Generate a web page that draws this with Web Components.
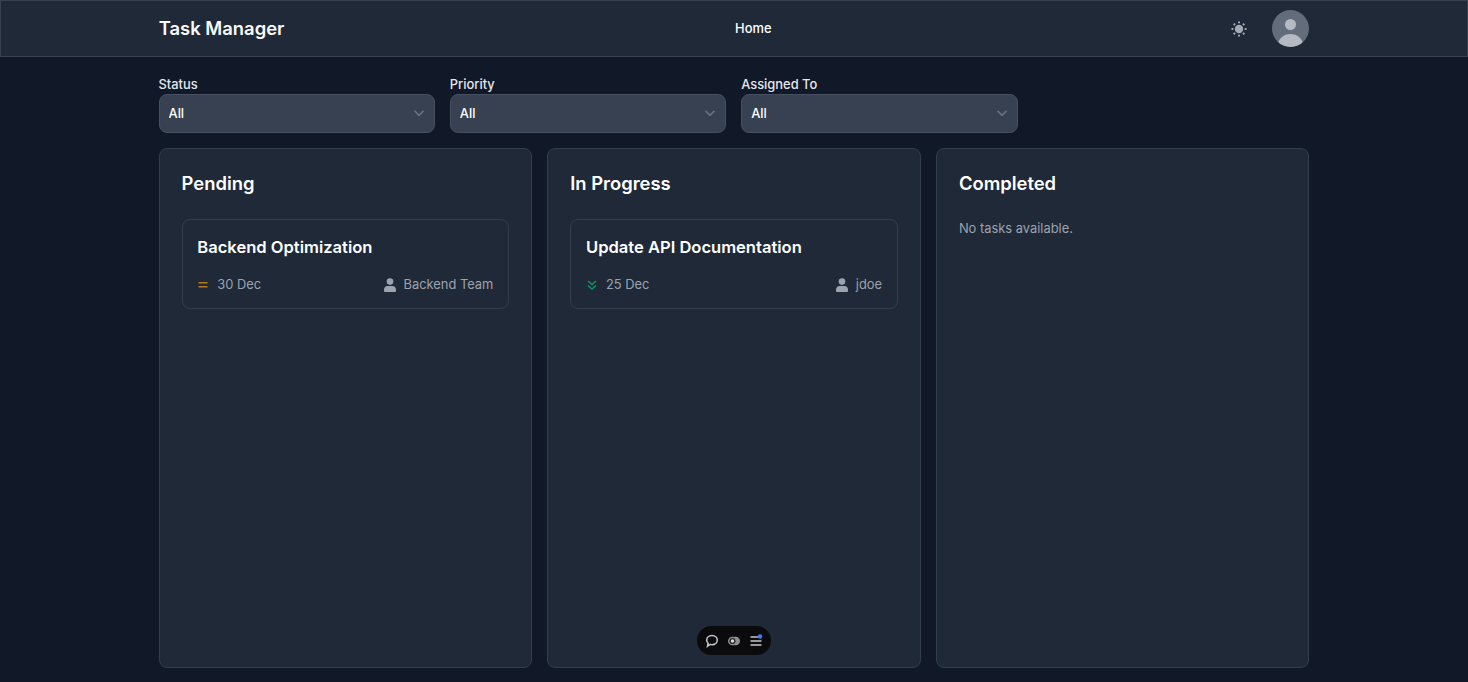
<!DOCTYPE html>
<html lang="en">
<head>
<meta charset="utf-8">
<title>Task Manager</title>
<style>
    html {
        font-size: 14.72px;
    }
    html, body {
        margin: 0;
        height: 100%;
        overflow: hidden;
        background: #111827;
        color: #fff;
        font-family: Inter, "Liberation Sans", sans-serif;
    }
</style>
</head>
<body>
<tm-app></tm-app>
<script>
const userIcon = `<svg viewBox="0 0 12 14" fill="currentColor"><circle cx="6" cy="3.600" r="3.300"/><path d="M3.500 8h5C10.500 8 12 9.600 12 11.600V13a1 1 0 0 1-1 1H1a1 1 0 0 1-1-1v-1.400C0 9.600 1.500 8 3.500 8z"/></svg>`

class TmHeader extends HTMLElement{
    constructor(){
        super()
        const root = this.attachShadow({mode:'open'})
        root.innerHTML = `
        <style>
            :host {
                display: block;
                background: #1f2937;
                border: 1px solid #374151;
            }
            nav {
                box-sizing: border-box;
                width: 1150.500px;
                height: 55px;
                margin: 0 auto;
                display: flex;
                justify-content: space-between;
                align-items: center;
            }
            .brand { font-size: 18.4px; line-height: 24px; padding-bottom: 2px; font-weight: 600; color: #f9fafb; }
            .home { font-size: 12.88px; font-weight: 500; color: #fff; }
            .actions { display: flex; align-items: center; gap: 15px; }
            .toggle { width: 35px; height: 35px; display: flex; align-items: center; justify-content: center; }
            .sun { width: 18px; height: 18px; margin-right: 1px; color: #a3aab5; display: block; }
            .avatar { width: 37px; height: 37px; border-radius: 50%; overflow: hidden; display: block; }
        </style>
        <nav>
            <div class="brand">Task Manager</div>
            <div class="home">Home</div>
            <div class="actions">
                <div class="toggle">
                    <svg class="sun" viewBox="0 0 18 18" fill="none" stroke="currentColor" stroke-width="2">
                        <circle cx="9" cy="9" r="4.200" fill="currentColor" stroke="none"/>
                        <path d="M9 1.500v1.800M9 14.700v1.800M1.500 9h1.800M14.700 9h1.800M3.700 3.700l1.300 1.300M13 13l1.300 1.300M3.700 14.300L5 13M13 5l1.300-1.300"/>
                    </svg>
                </div>
                <svg class="avatar" viewBox="0 0 37 37">
                    <rect width="37" height="37" fill="#636c7a"/>
                    <circle cx="18.500" cy="14.500" r="5.500" fill="#b4b9c4"/>
                    <ellipse cx="18.500" cy="35" rx="12.500" ry="11" fill="#b4b9c4"/>
                </svg>
            </div>
        </nav>`
    }
}

class TmFilter extends HTMLElement{
    constructor(){
        super()
        const root = this.attachShadow({mode:'open'})
        root.innerHTML = `
        <style>
            :host { display: block; position: relative; }
            label { display: block; font-size: 12.88px; line-height: 19px; padding-top: 1px; font-weight: 500; color: #e5e7eb; }
            select {
                appearance: none;
                display: block;
                box-sizing: border-box;
                width: 100%;
                height: 39px;
                padding: 0 9px;
                font: 500 12.88px Inter, "Liberation Sans", sans-serif;
                color: #fff;
                background: #374151;
                border: 1px solid #465060;
                border-radius: 8px;
            }
            svg {
                position: absolute;
                right: 7px;
                bottom: 11px;
                width: 18px;
                height: 18px;
                color: #6b7280;
                pointer-events: none;
            }
        </style>
        <label for="f">${this.getAttribute('label')}</label>
        <select id="f"><option>All</option></select>
        <svg viewBox="0 0 20 20" fill="none" stroke="currentColor" stroke-width="1.800"><path d="M5 7.500l5 5 5-5"/></svg>`
    }
}

class TmColumn extends HTMLElement{
    constructor(){
        super()
        const root = this.attachShadow({mode:'open'})
        root.innerHTML = `
        <style>
            :host {
                display: block;
                box-sizing: border-box;
                min-width: 0;
                padding: 1.5rem;
                background: #1f2937;
                border: 1px solid #323d4d;
                border-radius: 8px;
            }
            h2 { margin: 0 0 1.5rem; font-size: 1.25rem; line-height: 1.75rem; font-weight: 600; color: #fff; }
            .list { display: flex; flex-direction: column; gap: 12px; }
            ::slotted(p) { margin: 1px 0 0; font-size: .875rem; line-height: 1.25rem; color: #9ca3af; }
        </style>
        <h2>${this.getAttribute('title')}</h2>
        <div class="list"><slot></slot></div>`
    }
}

class TmCard extends HTMLElement{
    constructor(){
        super()
        const root = this.attachShadow({mode:'open'})
        const icons = {
            medium: `<svg class="prio" style="color:#b7791f" viewBox="0 0 12 12" fill="none" stroke="currentColor" stroke-width="1.500"><path d="M1.500 3.800h9M1.500 7.800h9"/></svg>`,
            low: `<svg class="prio" style="color:#059669" viewBox="0 0 12 12" fill="none" stroke="currentColor" stroke-width="1.500"><path d="M2 2l4 3.500L10 2M2 6.500L6 10l4-3.500"/></svg>`
        }
        root.innerHTML = `
        <style>
            :host {
                display: block;
                box-sizing: border-box;
                padding: 1rem 1rem calc(1rem - 2px);
                background: #1f2937;
                border: 1px solid #323d4d;
                border-radius: 8px;
            }
            h3 { margin: 0 0 15px; font-size: 1.125rem; line-height: 1.75rem; font-weight: 600; color: #fff; }
            .meta { display: flex; justify-content: space-between; align-items: center; font-size: .875rem; line-height: 20px; color: #9ca3af; }
            .side { display: flex; align-items: center; gap: 8px; }
            .prio { width: 12px; height: 12px; display: block; }
            .user { width: 12px; height: 14px; display: block; color: #9ca3af; }
            .user svg { display: block; width: 12px; height: 14px; }
        </style>
        <h3><slot></slot></h3>
        <div class="meta">
            <div class="side">${icons[this.getAttribute('priority')]}<span>${this.getAttribute('date')}</span></div>
            <div class="side"><span class="user">${userIcon}</span><span>${this.getAttribute('assignee')}</span></div>
        </div>`
    }
}

class TmToolbar extends HTMLElement{
    constructor(){
        super()
        const root = this.attachShadow({mode:'open'})
        root.innerHTML = `
        <style>
            :host {
                position: fixed;
                left: 697px;
                top: 626px;
                width: 74px;
                height: 29px;
                box-sizing: border-box;
                padding: 0 8px;
                display: flex;
                align-items: center;
                justify-content: space-between;
                background: #0b0b0d;
                border-radius: 15px;
                color: #c4c6ca;
            }
            svg { width: 14px; height: 14px; display: block; }
        </style>
        <svg viewBox="0 0 14 14" fill="none" stroke="currentColor" stroke-width="1.500"><path d="M7 1.500c3 0 5.300 2 5.300 4.600S10 10.700 7 10.700c-.7 0-1.300-.1-1.900-.3L2.500 12.300l.6-3.100C2.200 8.400 1.700 7.300 1.700 6.100 1.700 3.500 4 1.500 7 1.500z"/></svg>
        <svg viewBox="0 0 14 14"><rect x="1" y="2.700" width="12" height="8.600" rx="4.300" fill="#8d8f94"/><circle cx="5.500" cy="7" r="3.100" fill="#2a2b2e"/><circle cx="5.500" cy="7" r="1.700" fill="#d8d9db"/></svg>
        <svg viewBox="0 0 14 14" fill="none" stroke="currentColor" stroke-width="1.700"><path d="M1.500 3h7.500M1.500 7h11M1.500 11h11"/><circle cx="11" cy="2.500" r="2.200" fill="#3b82f6" stroke="none"/></svg>`
    }
}

class TmApp extends HTMLElement{
    constructor(){
        super()
        const root = this.attachShadow({mode:'open'})
        root.innerHTML = `
        <style>
            :host { display: block; height: 682px; }
            main { width: 1151px; margin: 0 auto; padding-top: 17px; }
            .filters { display: grid; grid-template-columns: repeat(3, 1fr); gap: 15px; width: 859px; }
            .board { display: grid; grid-template-columns: repeat(3, 1fr); gap: 15px; height: 520px; margin-top: 15px; }
        </style>
        <tm-header></tm-header>
        <main>
            <div class="filters">
                <tm-filter label="Status"></tm-filter>
                <tm-filter label="Priority"></tm-filter>
                <tm-filter label="Assigned To"></tm-filter>
            </div>
            <div class="board">
                <tm-column title="Pending">
                    <tm-card priority="medium" date="30 Dec" assignee="Backend Team">Backend Optimization</tm-card>
                </tm-column>
                <tm-column title="In Progress">
                    <tm-card priority="low" date="25 Dec" assignee="jdoe">Update API Documentation</tm-card>
                </tm-column>
                <tm-column title="Completed">
                    <p>No tasks available.</p>
                </tm-column>
            </div>
        </main>
        <tm-toolbar></tm-toolbar>`
    }
}

customElements.define('tm-header', TmHeader)
customElements.define('tm-filter', TmFilter)
customElements.define('tm-column', TmColumn)
customElements.define('tm-card', TmCard)
customElements.define('tm-toolbar', TmToolbar)
customElements.define('tm-app', TmApp)
</script>
</body>
</html>
